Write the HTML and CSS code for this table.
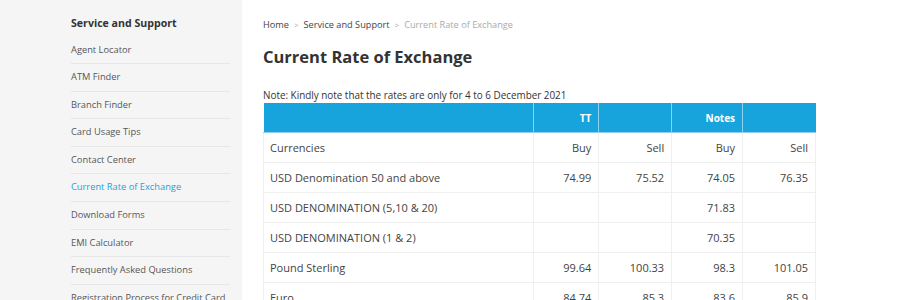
FILE: index.html
```html
<!DOCTYPE html>
<html>
<head>
<meta charset="utf-8">
<link rel="stylesheet" href="styles.css">
</head>
<body>
<div class="page">
  <aside class="sidebar">
    <h3 class="side-title">Service and Support</h3>
    <ul class="side-list">
      <li><a>Agent Locator</a></li>
      <li><a>ATM Finder</a></li>
      <li><a>Branch Finder</a></li>
      <li><a>Card Usage Tips</a></li>
      <li><a>Contact Center</a></li>
      <li><a class="active">Current Rate of Exchange</a></li>
      <li><a>Download Forms</a></li>
      <li><a>EMI Calculator</a></li>
      <li><a>Frequently Asked Questions</a></li>
      <li><a>Registration Process for Credit Card</a></li>
    </ul>
  </aside>
  <main class="main">
    <nav class="crumbs">
      <span class="crumb">Home</span><span class="sep">&gt;</span><span class="crumb">Service and Support</span><span class="sep">&gt;</span><span class="crumb current">Current Rate of Exchange</span>
    </nav>
    <h1 class="title">Current Rate of Exchange</h1>
    <p class="note">Note: Kindly note that the rates are only for 4 to 6 December 2021</p>
    <table class="rates">
      <colgroup>
        <col class="c1"><col class="c2"><col class="c3"><col class="c4"><col class="c5">
      </colgroup>
      <thead>
        <tr><th></th><th>TT</th><th></th><th>Notes</th><th></th></tr>
      </thead>
      <tbody>
        <tr><td>Currencies</td><td>Buy</td><td>Sell</td><td>Buy</td><td>Sell</td></tr>
        <tr><td>USD Denomination 50 and above</td><td>74.99</td><td>75.52</td><td>74.05</td><td>76.35</td></tr>
        <tr><td>USD DENOMINATION (5,10 &amp; 20)</td><td></td><td></td><td>71.83</td><td></td></tr>
        <tr><td>USD DENOMINATION (1 &amp; 2)</td><td></td><td></td><td>70.35</td><td></td></tr>
        <tr><td>Pound Sterling</td><td>99.64</td><td>100.33</td><td>98.3</td><td>101.05</td></tr>
        <tr><td>Euro</td><td>84.74</td><td>85.3</td><td>83.6</td><td>85.9</td></tr>
      </tbody>
    </table>
  </main>
</div>
</body>
</html>
```

FILE: styles.css
```css
html, body {
  margin: 0;
  padding: 0;
  background: #fff;
  font-family: "Open Sans", "Liberation Sans", sans-serif;
  color: #444;
}
.page {
  display: flex;
  align-items: stretch;
  min-height: 300px;
}
.sidebar {
  width: 242px;
  flex: 0 0 242px;
  box-sizing: border-box;
  background: #f5f5f5;
  padding: 14px 12px 0 71px;
}
.side-title {
  margin: 0 0 4.5px;
  font-size: 10.6px;
  font-weight: 700;
  color: #333;
  line-height: 18px;
}
.side-list {
  list-style: none;
  margin: 0;
  padding: 0;
}
.side-list li {
  border-bottom: 1px solid #e6e6e6;
  height: 27.6px;
  box-sizing: border-box;
  line-height: 26px;
  font-size: 9.3px;
  white-space: nowrap;
}
.side-list a {
  color: #555;
}
.side-list a.active {
  color: #1aa3dc;
}
.main {
  flex: 1;
  padding: 17px 0 0 21px;
}
.crumbs {
  font-size: 9.2px;
  line-height: 16px;
  color: #444;
}
.sep {
  color: #aaa;
  margin: 0 5px;
  font-size: 8px;
}
.crumb.current {
  color: #aaa;
}
.title {
  margin: 12px 0 0;
  font-size: 16.5px;
  font-weight: 700;
  color: #333;
  line-height: 24px;
}
.note {
  margin: 19px 0 0;
  font-size: 9.9px;
  line-height: 15px;
  color: #333;
}
.rates {
  border-collapse: collapse;
  width: 553px;
  font-size: 11px;
  color: #444;
}
.c1 { width: 271px; }
.c2 { width: 65px; }
.c3 { width: 73px; }
.c4 { width: 71px; }
.c5 { width: 73px; }
.rates th {
  background: #17a4dd;
  color: #fff;
  font-weight: 700;
  font-size: 10px;
  height: 29px;
  padding: 0 7px;
  text-align: right;
  border-left: 1px solid #8fd0ee;
  border-bottom: 1px solid #8fd0ee;
}
.rates th:first-child {
  border-left: none;
}
.rates td {
  height: 30px;
  box-sizing: border-box;
  padding: 0 7px;
  text-align: right;
  border: 1px solid #efefef;
  border-top: none;
}
.rates td:first-child {
  text-align: left;
  padding-left: 6px;
}
```
